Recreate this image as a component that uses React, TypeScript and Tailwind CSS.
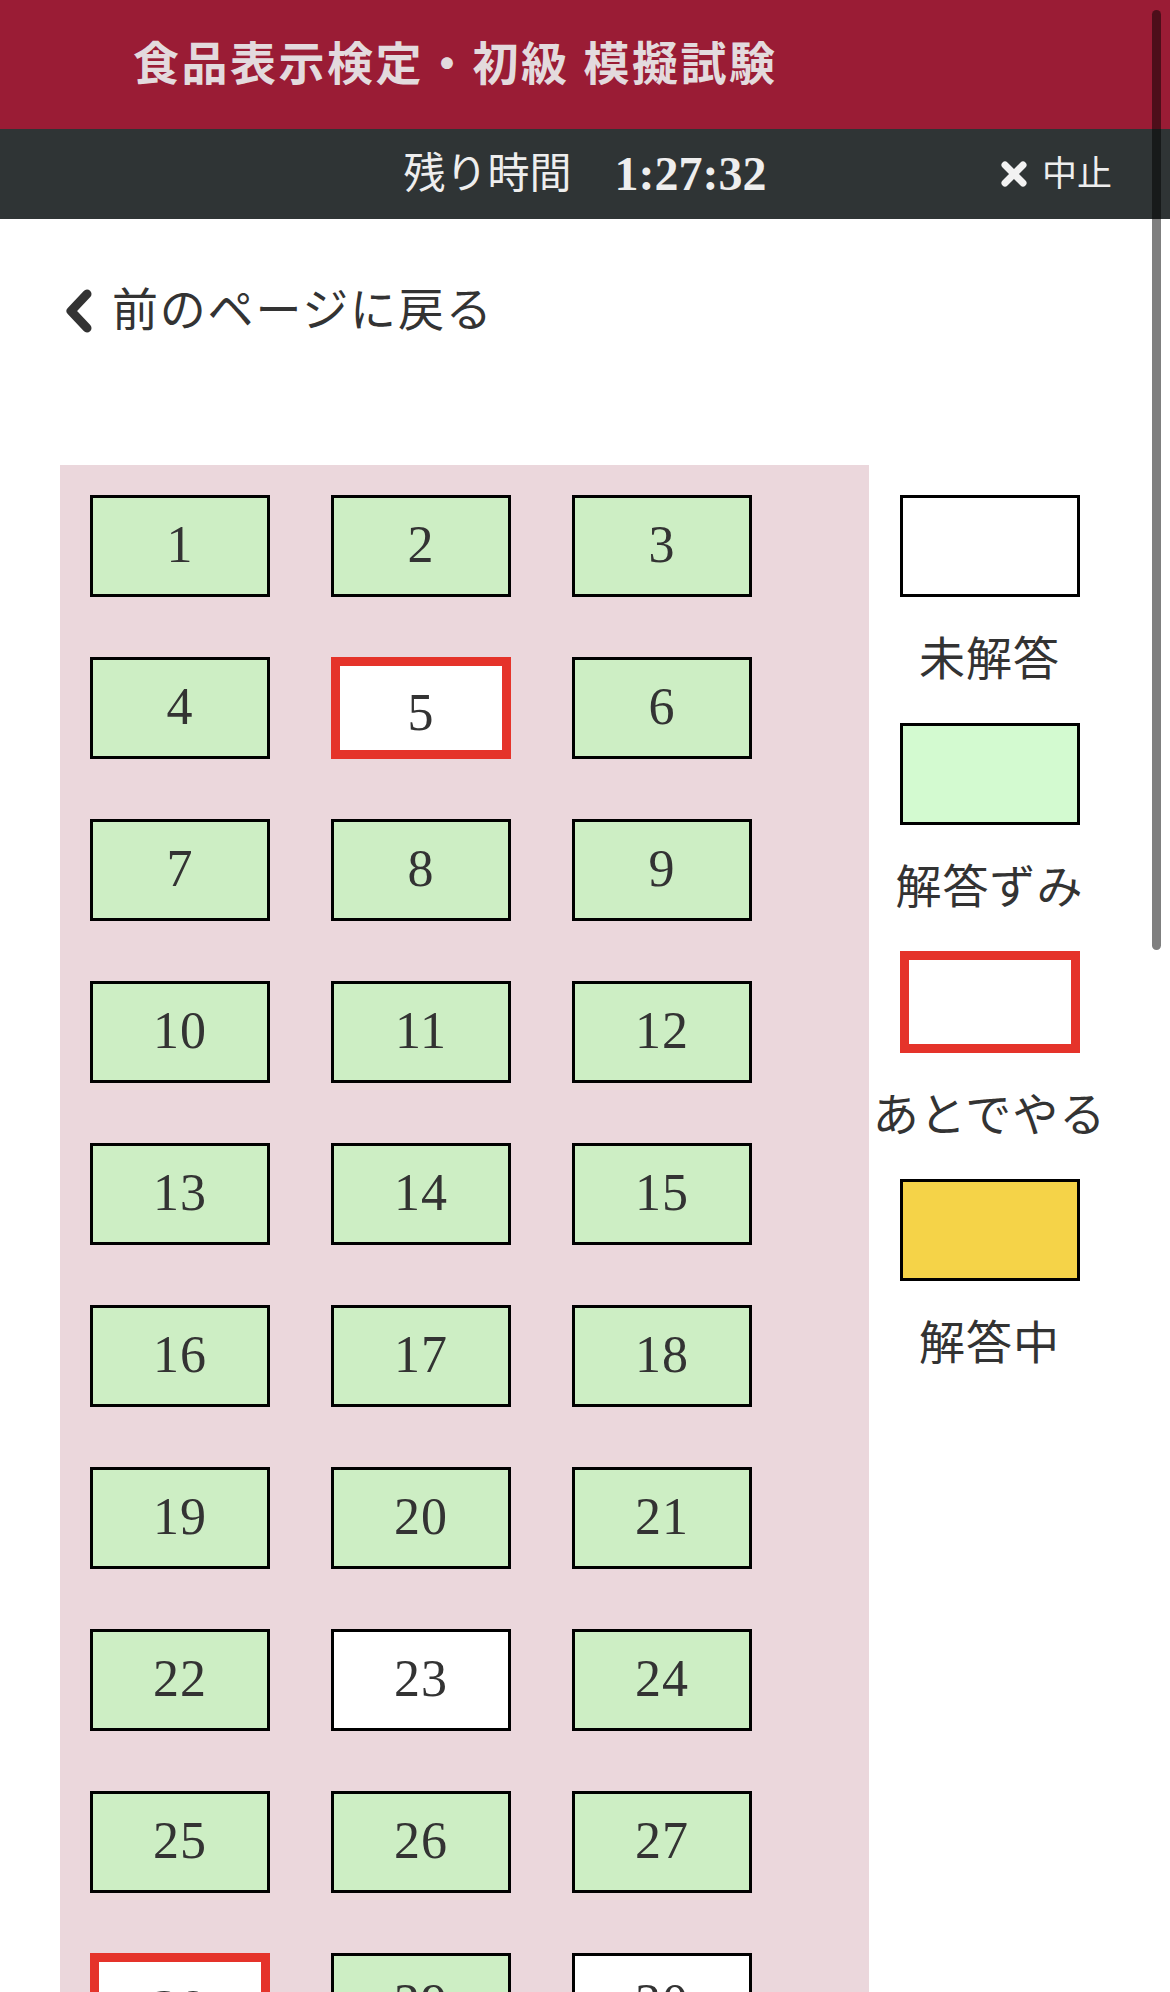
import React from 'react';

type Status = 'done' | 'empty' | 'later' | 'current';

const STATUS: Record<number, Status> = { 5: 'later', 23: 'empty', 28: 'later', 30: 'empty' };

const QUESTIONS = Array.from({ length: 30 }, (_, i) => ({
    no: i + 1,
    status: STATUS[i + 1] || ('done' as Status),
}));

const BOX_STYLE: Record<Status, string> = {
    done: 'bg-[#cdeec4] border-[3px] border-black',
    empty: 'bg-white border-[3px] border-black',
    later: 'bg-white border-[9px] border-[#e5332a]',
    current: 'bg-[#f5d348] border-[3px] border-black',
};

const LEGEND: { label: string; box: string }[] = [
    { label: '未解答', box: 'bg-white border-[3px] border-black' },
    { label: '解答ずみ', box: 'bg-[#d3fad0] border-[3px] border-black' },
    { label: 'あとでやる', box: 'bg-white border-[9px] border-[#e5332a]' },
    { label: '解答中', box: 'bg-[#f5d348] border-[3px] border-black' },
];

const FONT = { fontFamily: '"Liberation Serif", "Noto Sans CJK JP", serif' };

export default function App() {
    return (
        <div className="relative h-[1992px] overflow-hidden bg-white text-[#333]" style={FONT}>
            {/* Header */}
            <header className="h-[129px] bg-[#9a1c35] flex items-center pl-[133px]">
                <h1 className="text-[46px] font-bold text-[#e3dadd] leading-none tracking-[2.5px]">食品表示検定・初級 模擬試験</h1>
            </header>

            {/* Timer bar */}
            <div className="h-[90px] bg-[#2f3435] grid grid-cols-[1fr_auto_1fr] items-center text-[#eeeeee]">
                <div />
                <div className="flex items-center gap-[43px]">
                    <span className="text-[42px] leading-none">残り時間</span>
                    <span className="text-[48px] font-bold leading-none">1:27:32</span>
                </div>
                <button className="justify-self-end mr-[58px] flex items-center gap-[14px] text-[35px] leading-none text-[#eeeeee]">
                    <svg width="28" height="28" viewBox="0 0 28 28">
                        <path d="M5 5 L23 23 M23 5 L5 23" stroke="#f2f2f2" strokeWidth="7" strokeLinecap="round" />
                    </svg>
                    中止
                </button>
            </div>

            {/* Back link */}
            <div className="pt-[62px] mb-[124px] pl-[63px]">
                <a className="flex items-center gap-[19px] h-[60px] text-[46px] leading-none tracking-[1.8px] text-[#333]">
                    <svg width="30" height="44" viewBox="0 0 30 44">
                        <path d="M24 5 L8 22 L24 39" fill="none" stroke="#333" strokeWidth="9" strokeLinecap="round" strokeLinejoin="round" />
                    </svg>
                    前のページに戻る
                </a>
            </div>

            {/* Question grid + legend */}
            <div className="flex px-[60px]">
                <div className="w-[809px] min-h-[1600px] bg-[#ebd7dc] pt-[30px] pl-[30px]">
                    <div className="grid grid-cols-[repeat(3,180px)] gap-x-[61px] gap-y-[60px]">
                        {QUESTIONS.map((q) => (
                            <div
                                key={q.no}
                                className={`h-[102px] pt-[17px] text-center text-[52px] leading-[60px] tracking-[1px] text-[#333] ${BOX_STYLE[q.status]}`}
                            >
                                {q.no}
                            </div>
                        ))}
                    </div>
                </div>

                <div className="flex-1 flex flex-col items-center pt-[30px]">
                    {LEGEND.map((l) => (
                        <div key={l.label} className="flex flex-col items-center">
                            <div className={`w-[180px] h-[102px] ${l.box}`} />
                            <div className="h-[126px] flex items-center text-[46px] leading-none tracking-[1px] whitespace-nowrap text-[#333]">{l.label}</div>
                        </div>
                    ))}
                </div>
            </div>

            {/* overlay scrollbar */}
            <div className="absolute top-[10px] right-[9px] w-[9px] h-[940px] rounded-full bg-black/50" />
        </div>
    );
}
